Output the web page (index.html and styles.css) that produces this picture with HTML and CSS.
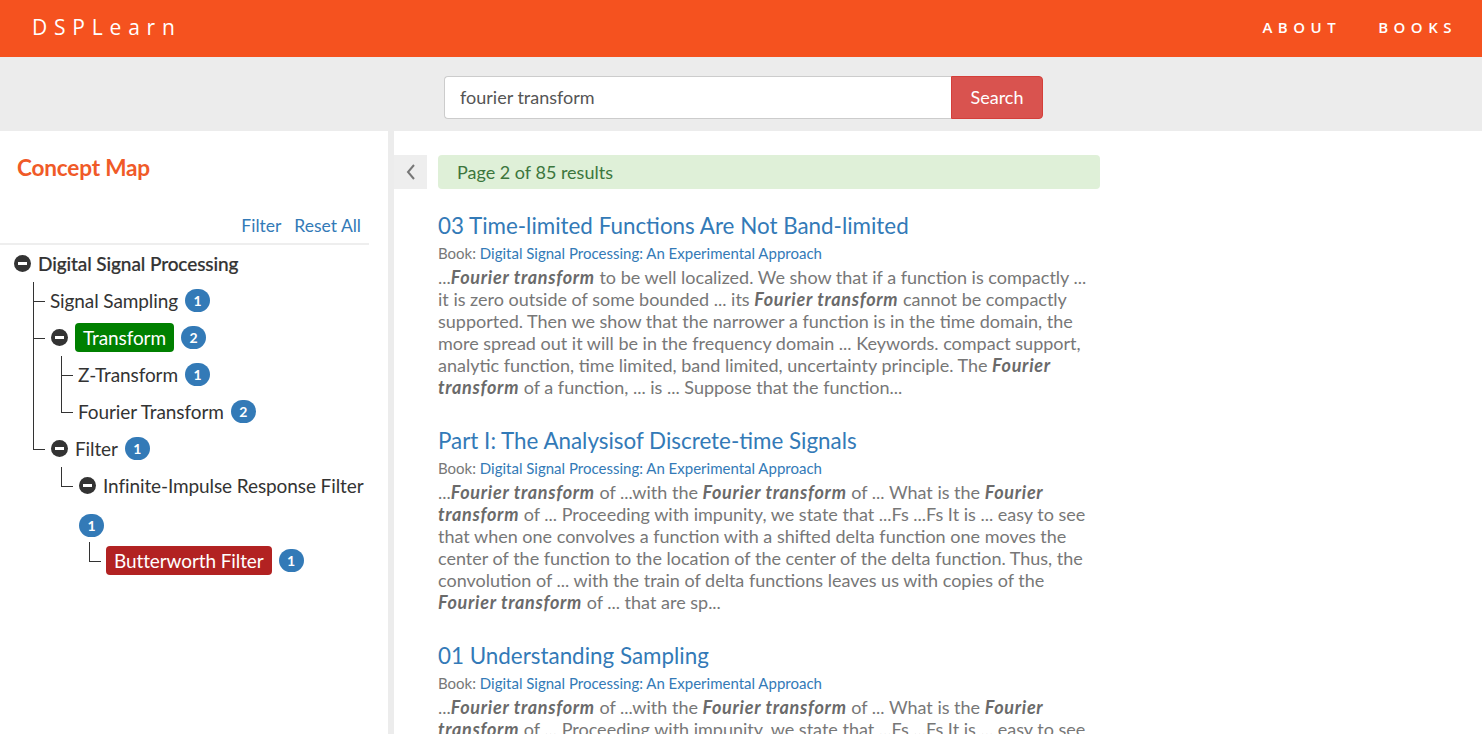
FILE: index.html
```html
<!DOCTYPE html>
<html lang="en">
<head>
<meta charset="utf-8">
<title>DSPLearn</title>
<link rel="stylesheet" href="styles.css">
</head>
<body>
<header class="topbar">
  <a class="brand" href="#">DSPLearn</a>
  <nav class="nav">
    <a href="#">ABOUT</a>
    <a href="#">BOOKS</a>
  </nav>
</header>
<div class="searchband">
  <form class="searchgroup">
    <input class="searchinput" type="text" value="fourier transform">
    <button class="searchbtn" type="button">Search</button>
  </form>
</div>
<div class="layout">
  <aside class="sidebar">
    <h2 class="cm-title">Concept Map</h2>
    <div class="cm-tools"><a href="#">Filter</a><a href="#">Reset All</a></div>
    <ul class="tree">
      <li class="root">
        <div class="node"><span class="toggle"></span><span class="label root-label">Digital Signal Processing</span></div>
        <ul class="lvl1">
          <li><div class="node"><span class="label">Signal Sampling</span><span class="badge">1</span></div></li>
          <li>
            <div class="node"><span class="toggle"></span><span class="label tag-green">Transform</span><span class="badge">2</span></div>
            <ul>
              <li><div class="node"><span class="label">Z-Transform</span><span class="badge">1</span></div></li>
              <li><div class="node"><span class="label">Fourier Transform</span><span class="badge">2</span></div></li>
            </ul>
          </li>
          <li>
            <div class="node"><span class="toggle"></span><span class="label">Filter</span><span class="badge">1</span></div>
            <ul>
              <li>
                <div class="node"><span class="toggle"></span><span class="label">Infinite-Impulse Response Filter</span><span class="badge wrapped">1</span></div>
                <ul>
                  <li><div class="node"><span class="label tag-red">Butterworth Filter</span><span class="badge">1</span></div></li>
                </ul>
              </li>
            </ul>
          </li>
        </ul>
      </li>
    </ul>
  </aside>
  <div class="gutter"></div>
  <main class="main">
    <button class="backbtn" type="button" aria-label="Back">
      <svg width="12" height="18" viewBox="0 0 12 18"><path d="M9 2 L3 9 L9 16" fill="none" stroke="#777" stroke-width="2"/></svg>
    </button>
    <section class="results">
      <div class="alert">Page 2 of 85 results</div>
      <article class="result">
        <h3 class="r-title"><a href="#">03 Time-limited Functions Are Not Band-limited</a></h3>
        <div class="r-book">Book: <a href="#">Digital Signal Processing: An Experimental Approach</a></div>
        <p class="r-snip">...<em>Fourier transform</em> to be well localized. We show that if a function is compactly ... it is zero outside of some bounded ... its <em>Fourier transform</em> cannot be compactly supported. Then we show that the narrower a function is in the time domain, the more spread out it will be in the frequency domain ... Keywords. compact support, analytic function, time limited, band limited, uncertainty principle. The <em>Fourier transform</em> of a function, ... is ... Suppose that the function...</p>
      </article>
      <article class="result">
        <h3 class="r-title"><a href="#">Part I: The Analysisof Discrete-time Signals</a></h3>
        <div class="r-book">Book: <a href="#">Digital Signal Processing: An Experimental Approach</a></div>
        <p class="r-snip">...<em>Fourier transform</em> of ...with the <em>Fourier transform</em> of ... What is the <em>Fourier transform</em> of ... Proceeding with impunity, we state that ...Fs ...Fs It is ... easy to see that when one convolves a function with a shifted delta function one moves the center of the function to the location of the center of the delta function. Thus, the convolution of ... with the train of delta functions leaves us with copies of the <em>Fourier transform</em> of ... that are sp...</p>
      </article>
      <article class="result">
        <h3 class="r-title"><a href="#">01 Understanding Sampling</a></h3>
        <div class="r-book">Book: <a href="#">Digital Signal Processing: An Experimental Approach</a></div>
        <p class="r-snip">...<em>Fourier transform</em> of ...with the <em>Fourier transform</em> of ... What is the <em>Fourier transform</em> of ... Proceeding with impunity, we state that ...Fs ...Fs It is ... easy to see that when one convolves a function with a shifted delta function one moves the center of the function to the location of the center of the delta function.</p>
      </article>
    </section>
  </main>
</div>
</body>
</html>
```
FILE: styles.css
```css
* { box-sizing: border-box; }
html, body { margin: 0; padding: 0; }
body {
  font-family: Lato, "Open Sans", sans-serif;
  color: #333;
  background: #fff;
  overflow: hidden;
  height: 734px;
}
a { text-decoration: none; }

.topbar {
  height: 57px;
  background: #f5521f;
  display: flex;
  align-items: center;
  justify-content: space-between;
  padding: 0 25px 4px 32px;
}
.brand {
  color: #fff;
  font-family: "Open Sans", "DejaVu Sans", sans-serif;
  font-size: 21px;
  letter-spacing: 6.8px;
  font-weight: 400;
}
.nav { display: flex; gap: 37px; }
.nav a {
  color: #fff;
  font-family: "Open Sans", "DejaVu Sans", sans-serif;
  font-size: 15px;
  font-weight: 600;
  letter-spacing: 5.5px;
}

.searchband {
  height: 74px;
  background: #ececec;
  display: flex;
  align-items: center;
  justify-content: center;
  padding: 6px 0 0 5px;
}
.searchgroup { display: flex; margin: 0; }
.searchinput {
  width: 507px;
  height: 43px;
  border: 1px solid #ccc;
  border-right: none;
  border-radius: 4px 0 0 4px;
  padding: 0 15px;
  font-family: Lato, sans-serif;
  font-size: 18px;
  color: #555;
  outline: none;
}
.searchbtn {
  width: 92px;
  height: 43px;
  border: 1px solid #d43f3a;
  background: #d9534f;
  color: #fff;
  font-family: Lato, sans-serif;
  font-size: 18px;
  border-radius: 0 4px 4px 0;
  padding: 0;
}

.layout {
  display: grid;
  grid-template-columns: 388px 6px 1fr;
  min-height: 603px;
}
.gutter { background: #ececec; }

.sidebar { padding-top: 22px; }
.cm-title {
  margin: 0 0 0 17px;
  font-size: 22.6px;
  line-height: 30px;
  font-weight: 700;
  color: #f05a28;
  letter-spacing: -0.2px;
}
.cm-tools {
  margin: 31px 19px 0 0;
  padding: 0 8px 5px 0;
  line-height: 24px;
  border-bottom: 2px solid #eee;
  display: flex;
  justify-content: flex-end;
  gap: 13px;
  font-size: 17.5px;
}
.cm-tools a { color: #337ab7; }

.tree, .tree ul { list-style: none; margin: 0; padding: 0; }
.tree { margin: 0 14px 0 14px; }
.tree .lvl1 { margin-left: 19px; }
.tree .lvl1 li ul { margin-left: 11px; }
.tree li li { position: relative; padding-left: 17px; }
.tree li li::before {
  content: "";
  position: absolute;
  left: 0; top: 0;
  width: 11px; height: 19px;
  border-left: 1px solid #333;
  border-bottom: 1px solid #333;
}
.tree li li::after {
  content: "";
  position: absolute;
  left: 0; top: 19px; bottom: 0;
  border-left: 1px solid #333;
}
.tree li li:last-child::after { display: none; }

.node {
  display: flex;
  flex-wrap: wrap;
  align-items: center;
  font-size: 19px;
  color: #333;
}
.toggle {
  display: block;
  width: 17px; height: 17px;
  border-radius: 50%;
  background: #333;
  margin: 0 7px 0 1px;
  position: relative;
}
.toggle::after {
  content: "";
  position: absolute;
  left: 4px; top: 7px;
  width: 9px; height: 3px;
  background: #fff;
}
.root > .node .toggle { margin-left: 0; }
.label { white-space: nowrap; line-height: 37px; letter-spacing: -0.1px; }
.root-label { color: #333; font-weight: 500; -webkit-text-stroke: 0.2px #333; }
.tag-green, .tag-red {
  color: #fff;
  line-height: 29px;
  margin: 4px 0;
  padding: 0 8px;
  border-radius: 4px;
}
.tag-green { background: #008000; }
.tag-red { background: #b22222; }
.badge {
  display: block;
  min-width: 25px;
  height: 23px;
  line-height: 23px;
  padding: 0 7px;
  margin: 7px 0 7px 7px;
  border-radius: 12px;
  background: #337ab7;
  color: #fff;
  font-size: 14px;
  font-weight: 700;
  text-align: center;
}
.badge.wrapped { margin: 10px 0 5px 1px; }

.main {
  display: flex;
  align-items: flex-start;
  gap: 11px;
  padding-top: 24px;
}
.backbtn {
  width: 33px;
  height: 34px;
  border: none;
  background: #eee;
  padding: 0;
  display: flex;
  align-items: center;
  justify-content: center;
}
.results { width: 662px; }
.alert {
  height: 34px;
  line-height: 34px;
  background: #dff0d8;
  color: #3c763d;
  border-radius: 4px;
  padding: 0 19px;
  font-size: 18px;
}
.result { margin-top: 23px; }
.result + .result { margin-top: 29px; }
.r-title {
  margin: 0;
  font-size: 22.4px;
  line-height: 28px;
  font-weight: 400;
}
.r-title a { color: #337ab7; }
.r-book {
  font-size: 15px;
  line-height: 26px;
  color: #777;
}
.r-book a { color: #337ab7; }
.r-snip {
  margin: 0;
  font-size: 18px;
  line-height: 22px;
  color: #777;
}
.r-snip em { font-weight: 700; color: #6a6a6a; letter-spacing: 0.7px; }
```
